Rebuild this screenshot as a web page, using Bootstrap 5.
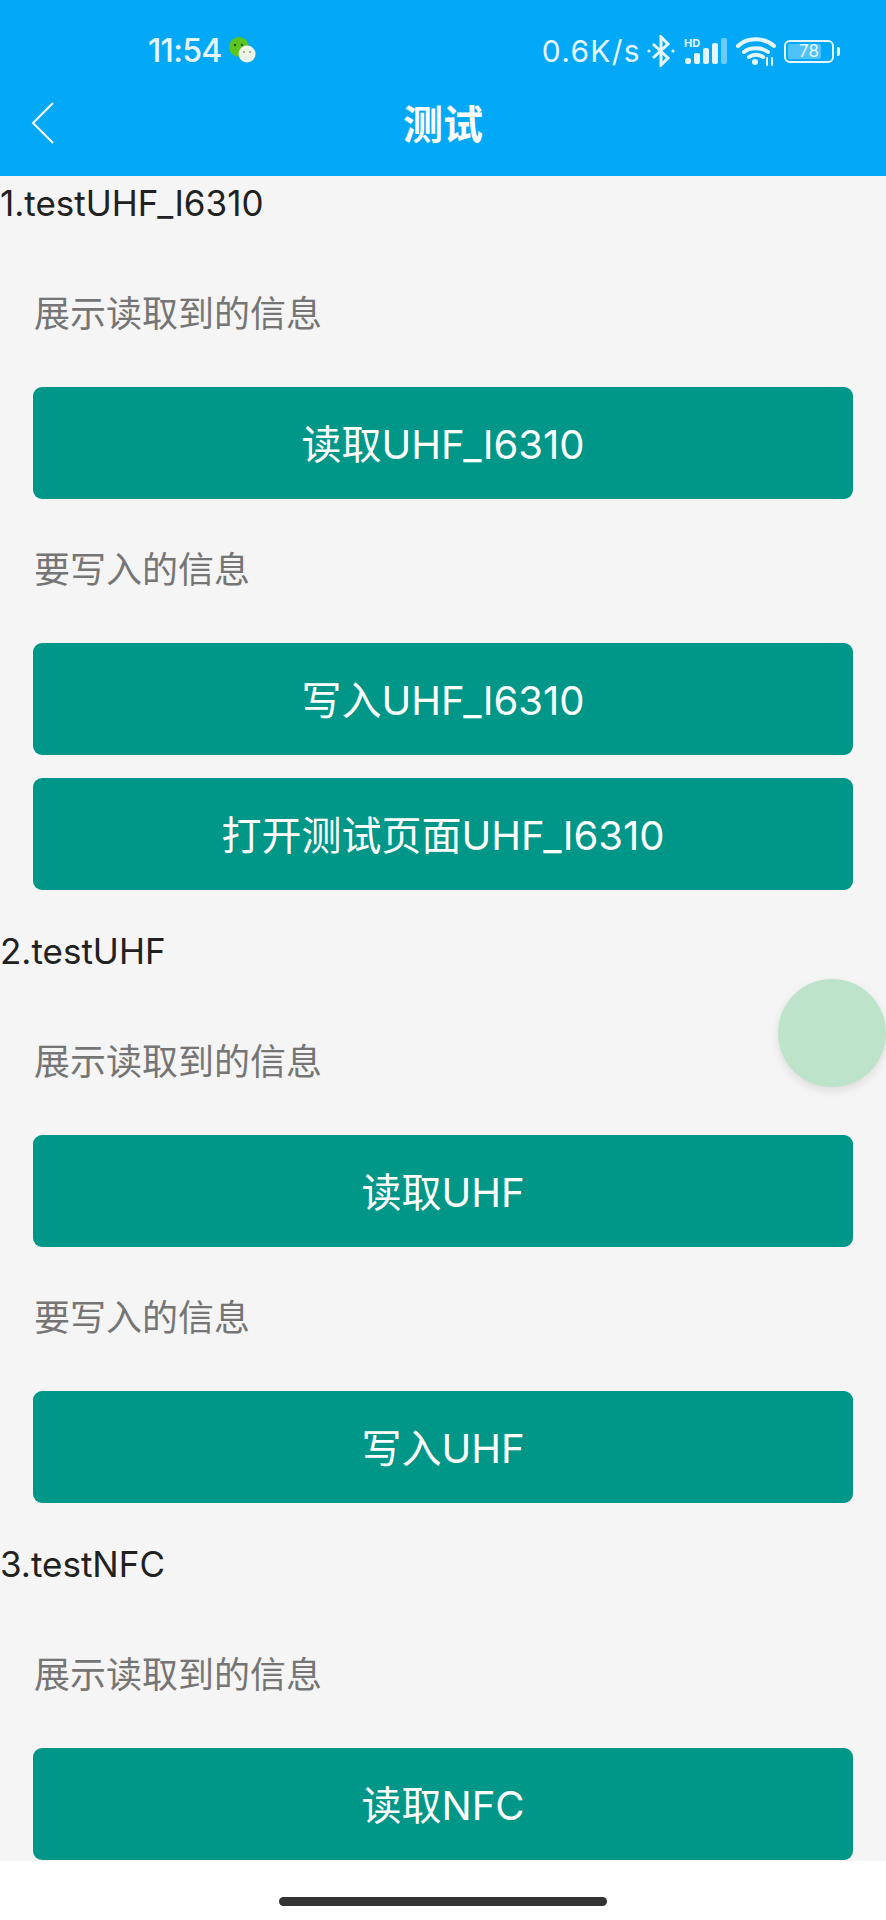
<!DOCTYPE html>
<html lang="zh">
<head>
    <meta charset="UTF-8">
    <meta name="viewport" content="width=device-width, initial-scale=1.0">
    <title>测试</title>
    <link href="https://cdn.jsdelivr.net/npm/bootstrap@5.3.3/dist/css/bootstrap.min.css" rel="stylesheet">
    <style>
        body{
            font-family: Inter, "Noto Sans CJK SC", sans-serif;
            background: #fff;
        }
        .app-screen{
            height: 1920px;
            position: relative;
            overflow: hidden;
        }
        .app-header{
            background: #03a9f6;
            height: 176px;
            color: #fff;
            flex: none;
        }
        .status-row{
            height: 80px;
            padding: 22px 46px 0 148px;
            color: #e6f6fe;
        }
        .status-time{
            font-size: 32px;
            font-weight: 500;
            letter-spacing: -0.7px;
            line-height: 1;
        }
        .wechat-icon{
            margin-left: 5px;
        }
        .status-speed{
            font-size: 30px;
            font-weight: 400;
            line-height: 1;
            margin-right: 5px;
            letter-spacing: 1.3px;
        }
        .battery-box{
            width: 50px;
            height: 23px;
            border: 2px solid #e6f6fe;
            border-radius: 6px;
            position: relative;
            padding: 2px;
        }
        .battery-fill{
            height: 100%;
            background: rgba(255,255,255,.3);
            border-radius: 2px;
        }
        .battery-num{
            position: absolute;
            inset: 0;
            font-size: 17px;
            line-height: 19px;
            text-align: center;
        }
        .battery-nub{
            width: 3px;
            height: 9px;
            margin-left: 3px;
            background: #e6f6fe;
            border-radius: 0 2px 2px 0;
        }
        .title-row{
            height: 96px;
            position: relative;
        }
        .back-icon{
            position: absolute;
            left: 30px;
            top: 21px;
        }
        .title-text{
            font-size: 40px;
            font-weight: 700;
            line-height: 90px;
        }
        .page-body{
            background: #f5f5f5;
            flex: 1 1 auto;
            min-height: 0;
            overflow: hidden;
        }
        .test-block + .test-block{
            margin-top: 34px;
        }
        .test-heading{
            font-size: 35px;
            font-weight: 400;
            line-height: 54px;
            height: 54px;
            color: #212121;
            margin: 0 0 60px;
        }
        .info-text{
            font-size: 36px;
            line-height: 48px;
            color: #757575;
            margin: 47px 0 49px;
            padding-left: 34px;
        }
        .test-btn{
            display: block;
            width: 820px;
            height: 112px;
            margin: 0 33px 23px;
            padding: 3px 0 0;
            background: #009688;
            border: 0;
            border-radius: 9px;
            color: #fff;
            font-size: 40px;
            line-height: 109px;
        }
        .float-ball{
            position: absolute;
            left: 778px;
            top: 979px;
            width: 108px;
            height: 108px;
            border-radius: 50%;
            background: #bde3cb;
            box-shadow: 0 4px 10px rgba(0,0,0,.1);
        }
        .nav-gap{
            height: 59px;
            flex: none;
            background: #fff;
        }
        .home-bar{
            width: 328px;
            height: 9px;
            margin-top: 36px;
            background: #333;
            border-radius: 5px;
        }
    </style>
</head>
<body>
    <div class="app-screen d-flex flex-column">
        <header class="app-header">
            <div class="status-row d-flex justify-content-between align-items-center">
                <div class="d-flex align-items-center">
                    <span class="status-time">11:54</span>
                    <svg class="wechat-icon" width="30" height="28" viewBox="0 0 30 28">
                        <circle cx="12" cy="10" r="10" fill="#5cc41f"/>
                        <circle cx="8" cy="8" r="1.2" fill="#1d5a10"/>
                        <circle cx="15" cy="8" r="1.2" fill="#1d5a10"/>
                        <circle cx="20" cy="17" r="8.5" fill="#eef5e6"/>
                        <circle cx="17" cy="15" r="1" fill="#8a9a7a"/>
                        <circle cx="23" cy="15" r="1" fill="#8a9a7a"/>
                    </svg>
                </div>
                <div class="d-flex align-items-center">
                    <span class="status-speed">0.6K/s</span>
                    <svg width="30" height="32" viewBox="0 0 30 32" fill="none" stroke="#e6f6fe" stroke-width="3">
                        <path d="M7 9l15 14-7 7V2l7 7L7 23"/>
                        <circle cx="3" cy="16" r="1.6" fill="#e6f6fe" stroke="none"/>
                        <circle cx="27" cy="16" r="1.6" fill="#e6f6fe" stroke="none"/>
                    </svg>
                    <svg class="ms-2" width="44" height="28" viewBox="0 0 44 28">
                        <text x="0" y="10" font-family="Inter, sans-serif" font-size="11" font-weight="700" fill="#e6f6fe">HD</text>
                        <rect x="1" y="21" width="6" height="6" rx="2.5" fill="#e6f6fe"/>
                        <rect x="10" y="16" width="6" height="11" rx="2" fill="#e6f6fe"/>
                        <rect x="19" y="11" width="6" height="16" rx="2" fill="#e6f6fe"/>
                        <rect x="28" y="6" width="6" height="21" rx="2" fill="#e6f6fe"/>
                        <rect x="37" y="1" width="6" height="26" rx="2" fill="#e6f6fe" opacity=".45"/>
                    </svg>
                    <svg class="ms-2" width="40" height="30" viewBox="0 0 40 30" fill="none" stroke="#e6f6fe" stroke-width="4" stroke-linecap="round">
                        <path d="M2 10C11 1 28 1 38 10"/>
                        <path d="M8 16c6-5 18-5 24 0"/>
                        <path d="M13 21c4-3 10-3 14 0"/>
                        <circle cx="19" cy="26" r="3" fill="#e6f6fe" stroke="none"/>
                        <path d="M31 22v7M36 22v7" stroke-width="2"/>
                    </svg>
                    <div class="battery-box ms-2">
                        <div class="battery-fill" style="width: 78%"></div>
                        <span class="battery-num">78</span>
                    </div>
                    <div class="battery-nub"></div>
                </div>
            </div>
            <div class="title-row text-center">
                <svg class="back-icon" width="26" height="44" viewBox="0 0 26 44" fill="none" stroke="#fff" stroke-width="2">
                    <path d="M23 2L3 22l20 20"/>
                </svg>
                <span class="title-text">测试</span>
            </div>
        </header>

        <main class="page-body">
            <section class="test-block">
                <h2 class="test-heading">1.testUHF_I6310</h2>
                <p class="info-text">展示读取到的信息</p>
                <button class="btn test-btn" type="button">读取UHF_I6310</button>
                <p class="info-text">要写入的信息</p>
                <button class="btn test-btn" type="button">写入UHF_I6310</button>
                <button class="btn test-btn" type="button">打开测试页面UHF_I6310</button>
            </section>
            <section class="test-block">
                <h2 class="test-heading">2.testUHF</h2>
                <p class="info-text">展示读取到的信息</p>
                <button class="btn test-btn" type="button">读取UHF</button>
                <p class="info-text">要写入的信息</p>
                <button class="btn test-btn" type="button">写入UHF</button>
            </section>
            <section class="test-block">
                <h2 class="test-heading">3.testNFC</h2>
                <p class="info-text">展示读取到的信息</p>
                <button class="btn test-btn" type="button">读取NFC</button>
            </section>
        </main>

        <div class="nav-gap d-flex justify-content-center">
            <div class="home-bar"></div>
        </div>

        <div class="float-ball"></div>
    </div>
    <script src="https://cdn.jsdelivr.net/npm/bootstrap@5.3.3/dist/js/bootstrap.bundle.min.js"></script>
</body>
</html>
